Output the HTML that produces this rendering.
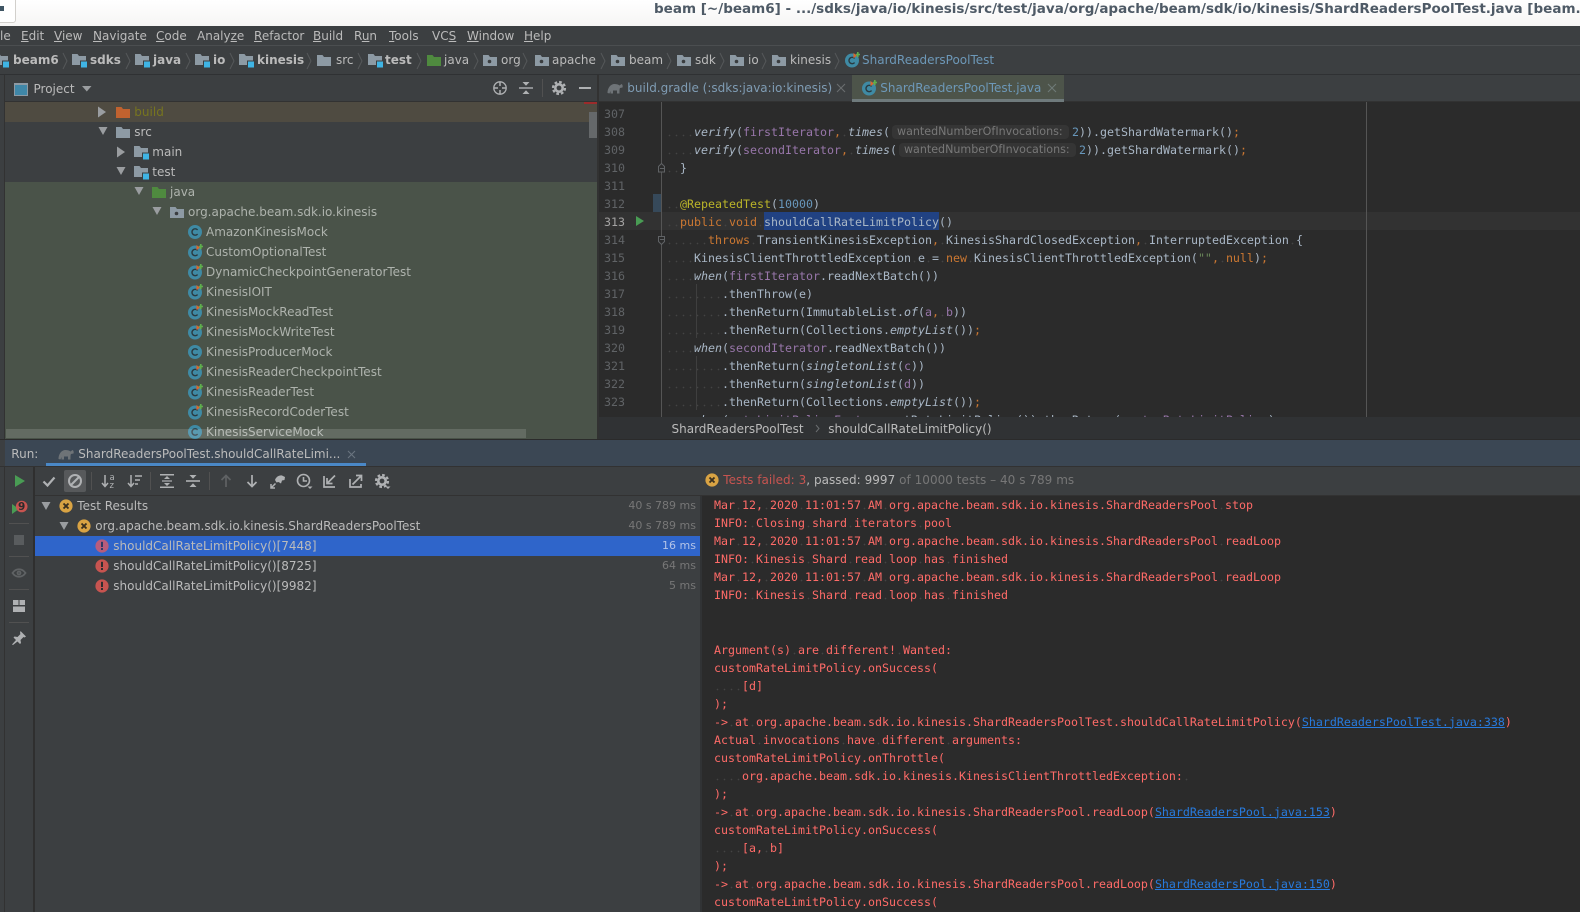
<!DOCTYPE html>
<html><head><meta charset="utf-8"><title>beam</title>
<style>
html,body{margin:0;padding:0;background:#3c3f41;width:1580px;height:912px;overflow:hidden}
#r{position:relative;width:1580px;height:912px;overflow:hidden;font:12px/20px "DejaVu Sans",sans-serif;color:#bbb}
.a{position:absolute}
.t{position:absolute;white-space:pre;line-height:20px}
.ic{position:absolute;width:16px;height:16px;overflow:visible}
.m{font-family:"DejaVu Sans Mono",monospace;font-size:11.63px;line-height:18px;white-space:pre;position:absolute;height:18px}
.code{color:#a9b7c6;left:666px;margin-top:1px}
.ln{color:#606366;left:604px;margin-top:1px}
.con{color:#ff6b68;left:714px}
.con a{color:#287bde;text-decoration:underline}
b{font-weight:normal;display:inline-block;vertical-align:top;height:18px;background:radial-gradient(circle at 3.5px 12.5px,#444 .6px,transparent 1px) 0 0/7px 18px repeat-x}
i{font-style:italic}
s{text-decoration:none;color:#cc7832}
u{text-decoration:none;color:#9876aa}
em{font-style:normal;color:#6897bb}
.h{display:inline-block;vertical-align:top;box-sizing:border-box;width:177px;height:14px;margin:2px 3px 0 2px;padding-left:5px;background:#353535;border-radius:4px;font:11.1px/14px "DejaVu Sans",sans-serif;color:#787878}
.sel{display:inline-block;vertical-align:top;height:18px;line-height:20px;margin-top:-1px;background:#214283}
.mu{text-decoration:underline}
.bd{font-weight:bold}
.dim{color:#777}
.dur{font-size:11px}
.sep{position:absolute;width:1px;background:#515151}
.g{position:absolute;width:1px;background:#3f3f3f}
.tr{color:#aeb3ad}
</style></head><body><div id="r">

<svg width="0" height="0" style="position:absolute"><defs>
<symbol id="fd" viewBox="0 0 16 16"><path d="M1 3h5.5L8 5h7v9H1z" fill="#8d9aa4"/></symbol>
<symbol id="sr" viewBox="0 0 16 16"><path d="M1 2h5.5L8 4h7v9H1z" fill="#8d9aa4"/><rect x="9" y="8.5" width="7" height="7" fill="#3c3f41"/><rect x="10" y="9.5" width="6" height="6" fill="#3fb4e4"/></symbol>
<symbol id="pk" viewBox="0 0 16 16"><path d="M1 3h5.5L8 5h7v9H1z" fill="#8d9aa4"/><circle cx="7.5" cy="9.5" r="1.8" fill="#3a3d3f"/></symbol>
<symbol id="gn" viewBox="0 0 16 16"><path d="M1 3h5.5L8 5h7v9H1z" fill="#4f8a3f"/></symbol>
<symbol id="or" viewBox="0 0 16 16"><path d="M1 3h5.5L8 5h7v9H1z" fill="#c0622f"/></symbol>
<symbol id="cl" viewBox="0 0 16 16"><circle cx="8" cy="8" r="7" fill="#3f8aa4"/><path d="M10.6 5.9a3.2 3.2 0 1 0 0 4.2" fill="none" stroke="#2a3a40" stroke-width="1.4"/></symbol>
<symbol id="ct" viewBox="0 0 16 16"><circle cx="8" cy="8.5" r="7" fill="#3f8aa4"/><path d="M10.6 6.4a3.2 3.2 0 1 0 0 4.2" fill="none" stroke="#2a3a40" stroke-width="1.4"/><path d="M9.5 1l3.5 2.6-3.5 2.6z" fill="#d9682e"/><path d="M13 0h1.6v1.8h1.6v1.5h-1.6v2H13v-2h-1V1.800h1z" fill="#5faf4d"/></symbol>
<symbol id="ar" viewBox="0 0 16 16"><path d="M4 2.500l8 5.500-8 5.500z" fill="#9a9da0"/></symbol>
<symbol id="ad" viewBox="0 0 16 16"><path d="M3.500 4h9L8 12z" fill="#9a9da0"/></symbol>
<symbol id="wn" viewBox="0 0 16 16"><circle cx="8" cy="8" r="6.600" fill="#d9a343"/><path d="M5.500 5.500l5 5M10.500 5.500l-5 5" stroke="#3a3020" stroke-width="1.900"/></symbol>
<symbol id="er" viewBox="0 0 16 16"><circle cx="8" cy="8" r="6.600" fill="#c75450"/><rect x="7" y="3.800" width="2" height="5.200" fill="#2f2f2f"/><rect x="7" y="10" width="2" height="2" fill="#2f2f2f"/></symbol>
<symbol id="eS" viewBox="0 0 16 16"><circle cx="8" cy="8" r="6.600" fill="#b85c7c"/><rect x="7" y="3.800" width="2" height="5.200" fill="#2f3a66"/><rect x="7" y="10" width="2" height="2" fill="#2f3a66"/></symbol>
<symbol id="gr" viewBox="0 0 16 16"><circle cx="8" cy="8" r="3.700" fill="none" stroke="#afb1b3" stroke-width="2.600"/><circle cx="8" cy="8" r="6" fill="none" stroke="#afb1b3" stroke-width="2.200" stroke-dasharray="2.700 2"/></symbol>
<symbol id="el" viewBox="0 0 16 16"><path d="M0.500 13c0-5 3-9 7-9 2 0 4 .5 5 1.500l2-1.500c1 .5 1.500 2 1 3.500l-2.500.5c-.5 1-.5 2-.5 5.500h-2.500v-3H6v3H3.500v-2.500l-1 2.500z" fill="#6e7377"/></symbol>
</defs></svg>

<!-- title bar -->
<div class="a" style="left:0;top:0;width:1580px;height:26px;background:linear-gradient(#fff,#f6f5f4)"></div>
<div class="a" style="left:-2px;top:-2px;width:16px;height:23px;border:1px solid #d2d0cc;background:#fff;border-radius:0 0 3px 0"></div>
<div class="a" style="left:0;top:6px;width:4px;height:5px;background:#3f5564"></div>
<div class="t" style="left:654px;top:-1px;color:#4e5a66;font-weight:bold;font-size:13.52px;line-height:20px">beam [~/beam6] - .../sdks/java/io/kinesis/src/test/java/org/apache/beam/sdk/io/kinesis/ShardReadersPoolTest.java [beam.</div>

<!-- menu -->
<div class="a" style="left:0;top:26px;width:1580px;height:19px;background:#3c3f41"></div>
<div class="a" style="left:0;top:45px;width:1580px;height:1px;background:#4b4e50"></div>
<div class="t" style="left:0;top:26px">le</div>
<div class="t" style="left:21px;top:26px"><span class="mu">E</span>dit</div>
<div class="t" style="left:54px;top:26px"><span class="mu">V</span>iew</div>
<div class="t" style="left:93px;top:26px"><span class="mu">N</span>avigate</div>
<div class="t" style="left:156px;top:26px"><span class="mu">C</span>ode</div>
<div class="t" style="left:197px;top:26px">Analy<span class="mu">z</span>e</div>
<div class="t" style="left:254px;top:26px"><span class="mu">R</span>efactor</div>
<div class="t" style="left:313px;top:26px"><span class="mu">B</span>uild</div>
<div class="t" style="left:354px;top:26px">R<span class="mu">u</span>n</div>
<div class="t" style="left:389px;top:26px"><span class="mu">T</span>ools</div>
<div class="t" style="left:432px;top:26px">VC<span class="mu">S</span></div>
<div class="t" style="left:467px;top:26px"><span class="mu">W</span>indow</div>
<div class="t" style="left:524px;top:26px"><span class="mu">H</span>elp</div>

<!-- nav bar -->
<div class="a" style="left:0;top:74px;width:1580px;height:1px;background:#2f3133"></div>
<svg class="ic" style="left:-7px;top:52px"><use href="#sr"/></svg>
<div class="t bd" style="left:13px;top:50px">beam6</div>
<svg class="ic" style="left:71px;top:52px"><use href="#sr"/></svg>
<div class="t bd" style="left:90px;top:50px">sdks</div>
<svg class="ic" style="left:134px;top:52px"><use href="#sr"/></svg>
<div class="t bd" style="left:153px;top:50px">java</div>
<svg class="ic" style="left:194px;top:52px"><use href="#sr"/></svg>
<div class="t bd" style="left:213px;top:50px">io</div>
<svg class="ic" style="left:238px;top:52px"><use href="#sr"/></svg>
<div class="t bd" style="left:257px;top:50px">kinesis</div>
<svg class="ic" style="left:316px;top:52px"><use href="#fd"/></svg>
<div class="t" style="left:336px;top:50px">src</div>
<svg class="ic" style="left:367px;top:52px"><use href="#sr"/></svg>
<div class="t bd" style="left:385px;top:50px">test</div>
<svg class="ic" style="left:426px;top:52px"><use href="#gn"/></svg>
<div class="t" style="left:444px;top:50px">java</div>
<svg class="ic" style="left:482px;top:52px"><use href="#pk"/></svg>
<div class="t" style="left:501px;top:50px">org</div>
<svg class="ic" style="left:534px;top:52px"><use href="#pk"/></svg>
<div class="t" style="left:552px;top:50px">apache</div>
<svg class="ic" style="left:610px;top:52px"><use href="#pk"/></svg>
<div class="t" style="left:629px;top:50px">beam</div>
<svg class="ic" style="left:676px;top:52px"><use href="#pk"/></svg>
<div class="t" style="left:695px;top:50px">sdk</div>
<svg class="ic" style="left:729px;top:52px"><use href="#pk"/></svg>
<div class="t" style="left:748px;top:50px">io</div>
<svg class="ic" style="left:771px;top:52px"><use href="#pk"/></svg>
<div class="t" style="left:790px;top:50px">kinesis</div>
<svg class="ic" style="left:844px;top:52px"><use href="#ct"/></svg>
<div class="t" style="left:862px;top:50px;color:#6d98b8">ShardReadersPoolTest</div>
<svg class="a" style="left:0;top:50px" width="860" height="22" fill="none" stroke="#55585a" stroke-width="1">
<path d="M63 3l4 8-4 8M126 3l4 8-4 8M186 3l4 8-4 8M230 3l4 8-4 8M307 3l4 8-4 8M358 3l4 8-4 8M417 3l4 8-4 8M474 3l4 8-4 8M523 3l4 8-4 8M601 3l4 8-4 8M667 3l4 8-4 8M720 3l4 8-4 8M762 3l4 8-4 8M835 3l4 8-4 8"/></svg>

<!-- project tool window header -->
<div class="a" style="left:4px;top:75px;width:1px;height:365px;background:#323232"></div>
<div class="a" style="left:5px;top:101px;width:593px;height:1px;background:#323232"></div>
<div class="a" style="left:14px;top:83px;width:12px;height:10px;border:1px solid #8d9aa4;border-top-width:2px;background:#3f87a8"></div>
<div class="t" style="left:33.500px;top:78.600px">Project</div>
<svg class="a" style="left:82px;top:85px" width="10" height="7"><path d="M0 1h9.500L4.800 6.500z" fill="#9a9da0"/></svg>
<svg class="ic" style="left:492px;top:80px" fill="none" stroke="#afb1b3" stroke-width="1.300"><circle cx="8" cy="8" r="6.200"/><path d="M8 1.500v4.500M8 10v4.500M1.500 8h4.500M10 8h4.500" stroke-width="1.500"/></svg>
<svg class="ic" style="left:518px;top:80px" fill="#afb1b3"><rect x="1" y="7.300" width="14" height="1.400"/><path d="M4.500 2h7L8 5.800zM4.500 14h7L8 10.200z"/></svg>
<div class="sep" style="left:542px;top:79px;height:18px"></div>
<svg class="ic" style="left:551px;top:80px"><use href="#gr"/></svg>
<div class="a" style="left:579px;top:87px;width:12px;height:2px;background:#afb1b3"></div>

<!-- project tree -->
<div class="a" style="left:5px;top:102px;width:593px;height:20px;background:#4f4b41"></div>
<div class="a" style="left:5px;top:182px;width:593px;height:257px;background:#4a5349"></div>
<div class="a" style="left:584px;top:102px;width:14px;height:2px;background:#9c2b2b"></div>
<div class="a" style="left:589px;top:112px;width:8px;height:26px;background:#65686a"></div>

<svg class="ic" style="left:94px;top:104px"><use href="#ar"/></svg>
<svg class="ic" style="left:115px;top:103.500px"><use href="#or"/></svg>
<div class="t" style="left:134.300px;top:101.700px;color:#77751f">build</div>
<svg class="ic" style="left:95px;top:123px"><use href="#ad"/></svg>
<svg class="ic" style="left:115px;top:123.500px"><use href="#fd"/></svg>
<div class="t" style="left:134.300px;top:121.700px">src</div>
<svg class="ic" style="left:113px;top:144px"><use href="#ar"/></svg>
<svg class="ic" style="left:133px;top:143.700px"><use href="#sr"/></svg>
<div class="t" style="left:152.300px;top:141.700px">main</div>
<svg class="ic" style="left:113px;top:163px"><use href="#ad"/></svg>
<svg class="ic" style="left:133px;top:163.700px"><use href="#sr"/></svg>
<div class="t" style="left:152.300px;top:161.700px">test</div>
<svg class="ic" style="left:131px;top:183px"><use href="#ad"/></svg>
<svg class="ic" style="left:151px;top:183.700px"><use href="#gn"/></svg>
<div class="t tr" style="left:170px;top:181.700px">java</div>
<svg class="ic" style="left:149px;top:203px"><use href="#ad"/></svg>
<svg class="ic" style="left:169px;top:203.700px"><use href="#pk"/></svg>
<div class="t tr" style="left:188px;top:201.700px">org.apache.beam.sdk.io.kinesis</div>

<svg class="ic" style="left:187px;top:223.700px"><use href="#cl"/></svg><div class="t tr" style="left:206px;top:221.700px">AmazonKinesisMock</div>
<svg class="ic" style="left:187px;top:243.700px"><use href="#ct"/></svg><div class="t tr" style="left:206px;top:241.700px">CustomOptionalTest</div>
<svg class="ic" style="left:187px;top:263.700px"><use href="#ct"/></svg><div class="t tr" style="left:206px;top:261.700px">DynamicCheckpointGeneratorTest</div>
<svg class="ic" style="left:187px;top:283.700px"><use href="#ct"/></svg><div class="t tr" style="left:206px;top:281.700px">KinesisIOIT</div>
<svg class="ic" style="left:187px;top:303.700px"><use href="#ct"/></svg><div class="t tr" style="left:206px;top:301.700px">KinesisMockReadTest</div>
<svg class="ic" style="left:187px;top:323.700px"><use href="#ct"/></svg><div class="t tr" style="left:206px;top:321.700px">KinesisMockWriteTest</div>
<svg class="ic" style="left:187px;top:343.700px"><use href="#cl"/></svg><div class="t tr" style="left:206px;top:341.700px">KinesisProducerMock</div>
<svg class="ic" style="left:187px;top:363.700px"><use href="#ct"/></svg><div class="t tr" style="left:206px;top:361.700px">KinesisReaderCheckpointTest</div>
<svg class="ic" style="left:187px;top:383.700px"><use href="#ct"/></svg><div class="t tr" style="left:206px;top:381.700px">KinesisReaderTest</div>
<svg class="ic" style="left:187px;top:403.700px"><use href="#ct"/></svg><div class="t tr" style="left:206px;top:401.700px">KinesisRecordCoderTest</div>
<svg class="ic" style="left:187px;top:423.700px"><use href="#cl"/></svg><div class="t tr" style="left:206px;top:421.700px">KinesisServiceMock</div>
<div class="a" style="left:6px;top:429px;width:520px;height:9px;background:rgba(255,255,255,.14)"></div>

<!-- editor tabs -->
<div class="a" style="left:597px;top:75px;width:2px;height:365px;background:#323232"></div>
<div class="a" style="left:599px;top:101px;width:981px;height:1px;background:#323232"></div>
<svg class="ic" style="left:607px;top:80px"><use href="#el"/></svg>
<div class="t" style="left:627.300px;top:78px;color:#7f9cb4">build.gradle (:sdks:java:io:kinesis)</div>
<svg class="a" style="left:836px;top:83px" width="10" height="10" stroke="#6a6d6f" stroke-width="1.100"><path d="M1 1l8 8M9 1l-8 8"/></svg>
<div class="a" style="left:852px;top:75px;width:212px;height:24px;background:#4d544a"></div>
<div class="a" style="left:852px;top:99px;width:212px;height:3px;background:#6f7a7c"></div>
<svg class="ic" style="left:861px;top:80px"><use href="#ct"/></svg>
<div class="t" style="left:880.300px;top:78px;color:#6d98b8">ShardReadersPoolTest.java</div>
<svg class="a" style="left:1047px;top:83px" width="10" height="10" stroke="#6f7a78" stroke-width="1.100"><path d="M1 1l8 8M9 1l-8 8"/></svg>

<!-- editor -->
<div class="a" id="ed" style="left:599px;top:102px;width:981px;height:315px;background:#2b2b2b;overflow:hidden"></div>
<div class="a" style="left:599px;top:212px;width:981px;height:18px;background:#323232"></div>
<div class="a" style="left:653px;top:194px;width:8px;height:18px;background:#36495a"></div>
<div class="a" style="left:661px;top:102px;width:1px;height:315px;background:#555"></div>
<div class="a" style="left:1366px;top:102px;width:1px;height:315px;background:#555"></div>
<div class="g" style="left:696px;top:284px;height:54px"></div>
<div class="g" style="left:696px;top:356px;height:54px"></div>
<svg class="a" style="left:657px;top:163px" width="10" height="10" fill="#2b2b2b" stroke="#606366"><path d="M1.500 5.500v-2l3-3 3 3v5.500h-6z"/><path d="M3 5.500h4"/></svg>
<svg class="a" style="left:657px;top:235px" width="10" height="10" fill="#2b2b2b" stroke="#606366"><path d="M1.500 1.500h6v5l-3 3-3-3z"/><path d="M3 4.500h4"/></svg>
<svg class="a" style="left:635px;top:215px" width="10" height="12"><path d="M1 1l8 5-8 5z" fill="#499c54"/></svg>

<div class="m ln" style="top:104px">307</div>
<div class="m ln" style="top:122px">308</div>
<div class="m ln" style="top:140px">309</div>
<div class="m ln" style="top:158px">310</div>
<div class="m ln" style="top:176px">311</div>
<div class="m ln" style="top:194px">312</div>
<div class="m ln" style="top:212px;color:#a4a3a3">313</div>
<div class="m ln" style="top:230px">314</div>
<div class="m ln" style="top:248px">315</div>
<div class="m ln" style="top:266px">316</div>
<div class="m ln" style="top:284px">317</div>
<div class="m ln" style="top:302px">318</div>
<div class="m ln" style="top:320px">319</div>
<div class="m ln" style="top:338px">320</div>
<div class="m ln" style="top:356px">321</div>
<div class="m ln" style="top:374px">322</div>
<div class="m ln" style="top:392px">323</div>

<div class="m code" style="top:122px"><b>    </b><i>verify</i>(<u>firstIterator</u><s>,</s><b> </b><i>times</i>(<span class="h">wantedNumberOfInvocations:</span><em>2</em>)).getShardWatermark()<s>;</s></div>
<div class="m code" style="top:140px"><b>    </b><i>verify</i>(<u>secondIterator</u><s>,</s><b> </b><i>times</i>(<span class="h">wantedNumberOfInvocations:</span><em>2</em>)).getShardWatermark()<s>;</s></div>
<div class="m code" style="top:158px"><b>  </b>}</div>
<div class="m code" style="top:194px"><b>  </b><span style="color:#bbb529">@RepeatedTest</span>(<em>10000</em>)</div>
<div class="m code" style="top:212px"><b>  </b><s>public</s><b> </b><s>void</s><b> </b><span class="sel">shouldCallRateLimitPolicy</span>()</div>
<div class="m code" style="top:230px"><b>      </b><s>throws</s><b> </b>TransientKinesisException<s>,</s><b> </b>KinesisShardClosedException<s>,</s><b> </b>InterruptedException<b> </b>{</div>
<div class="m code" style="top:248px"><b>    </b>KinesisClientThrottledException<b> </b>e<b> </b>=<b> </b><s>new</s><b> </b>KinesisClientThrottledException(<span style="color:#6a8759">""</span><s>,</s><b> </b><s>null</s>)<s>;</s></div>
<div class="m code" style="top:266px"><b>    </b><i>when</i>(<u>firstIterator</u>.readNextBatch())</div>
<div class="m code" style="top:284px"><b>        </b>.thenThrow(e)</div>
<div class="m code" style="top:302px"><b>        </b>.thenReturn(ImmutableList.<i>of</i>(<u>a</u><s>,</s><b> </b><u>b</u>))</div>
<div class="m code" style="top:320px"><b>        </b>.thenReturn(Collections.<i>emptyList</i>())<s>;</s></div>
<div class="m code" style="top:338px"><b>    </b><i>when</i>(<u>secondIterator</u>.readNextBatch())</div>
<div class="m code" style="top:356px"><b>        </b>.thenReturn(<i>singletonList</i>(<u>c</u>))</div>
<div class="m code" style="top:374px"><b>        </b>.thenReturn(<i>singletonList</i>(<u>d</u>))</div>
<div class="m code" style="top:392px"><b>        </b>.thenReturn(Collections.<i>emptyList</i>())<s>;</s></div>
<div class="m code" style="top:410px;height:6px;overflow:hidden"><b>    </b><i>when</i>(<u>rateLimitPolicyFactory</u>.getRateLimitPolicy()).thenReturn(<u>customRateLimitPolicy</u>)<s>;</s></div>

<!-- breadcrumbs -->
<div class="a" style="left:599px;top:417px;width:981px;height:22px;background:#303234"></div>
<div class="t" style="left:671.500px;top:418.500px">ShardReadersPoolTest</div>
<svg class="a" style="left:815px;top:424px" width="6" height="9" fill="none" stroke="#6a6d6f"><path d="M1 1l3 3.500-3 3.500"/></svg>
<div class="t" style="left:828.300px;top:418.500px">shouldCallRateLimitPolicy()</div>

<!-- run header -->
<div class="a" style="left:0;top:439px;width:1580px;height:1px;background:#2b2b2b"></div>
<div class="a" style="left:5px;top:440px;width:1575px;height:26px;background:#3b4754"></div>
<div class="a" style="left:0;top:466px;width:1580px;height:1px;background:#323232"></div>
<div class="t" style="left:11.300px;top:444px">Run:</div>
<svg class="ic" style="left:58px;top:446px"><use href="#el"/></svg>
<div class="t" style="left:78.300px;top:444px">ShardReadersPoolTest.shouldCallRateLimi...</div>
<svg class="a" style="left:347px;top:450px" width="9" height="9" stroke="#6a7580" stroke-width="1.100"><path d="M1 1l7 7M8 1l-7 7"/></svg>
<div class="a" style="left:46px;top:463px;width:320px;height:3px;background:#4a88c7"></div>

<!-- left stripe -->
<div class="a" style="left:4px;top:467px;width:1px;height:445px;background:#323232"></div>
<div class="a" style="left:33px;top:467px;width:2px;height:445px;background:#2f2f2f"></div>
<svg class="a" style="left:14px;top:474px" width="12" height="14"><path d="M1 1l10 6-10 6z" fill="#499c54"/></svg>
<svg class="a" style="left:11px;top:499px" width="18" height="17"><path d="M1 5l7 5-7 5z" fill="#499c54"/><circle cx="10.700" cy="7.500" r="5.800" fill="#c75450"/><text x="10.700" y="11.200" font-family="DejaVu Sans" font-weight="bold" font-size="10.500" text-anchor="middle" fill="#2b2b2b">9</text></svg>
<div class="a" style="left:9px;top:523px;width:20px;height:1px;background:#515151"></div>
<div class="a" style="left:14px;top:535px;width:10px;height:10px;background:#595c5e"></div>
<div class="a" style="left:9px;top:556px;width:20px;height:1px;background:#515151"></div>
<svg class="ic" style="left:11px;top:565px" fill="none" stroke="#5f6264" stroke-width="1.800"><path d="M1.500 8c3.500-5 9.500-5 13 0-3.500 5-9.500 5-13 0z"/><circle cx="8" cy="8" r="1.500"/></svg>
<div class="a" style="left:9px;top:589px;width:20px;height:1px;background:#515151"></div>
<svg class="ic" style="left:11px;top:598px" fill="#afb1b3"><path d="M2 2h5.500v5H2zM8.500 2H14v5H8.500zM2 8.500h12V14H2z"/></svg>
<div class="a" style="left:9px;top:622px;width:20px;height:1px;background:#515151"></div>
<svg class="ic" style="left:11px;top:630px" fill="#afb1b3"><path d="M9.500 1l5.500 5.500-1.500 1-1-.5-3 3 .5 3-1 1-2.500-2.500L2 15l-1-.5L5 10 2.500 7.500l1-1 3 .5 3-3-.5-1z"/></svg>

<!-- run toolbar -->
<div class="a" style="left:64px;top:470px;width:22px;height:22px;background:#57595b;border-radius:2px"></div>
<svg class="ic" style="left:41px;top:473px" fill="none" stroke="#afb1b3" stroke-width="2.200"><path d="M2.500 8.500l4 4 7-8"/></svg>
<svg class="ic" style="left:67px;top:473px" fill="none" stroke="#afb1b3" stroke-width="2"><circle cx="8" cy="8" r="6"/><path d="M4 12l8-8"/></svg>
<div class="sep" style="left:91px;top:472px;height:18px"></div>
<svg class="ic" style="left:101px;top:473px" fill="none" stroke="#afb1b3" stroke-width="1.500"><path d="M4 2v11M1 10l3 3.500L7 10"/><text x="8.500" y="7" font-family="DejaVu Sans" font-size="8.500" fill="#afb1b3" stroke="none">a</text><text x="8.500" y="15" font-family="DejaVu Sans" font-size="8.500" fill="#afb1b3" stroke="none">z</text></svg>
<svg class="ic" style="left:127px;top:473px" fill="none" stroke="#afb1b3" stroke-width="1.500"><path d="M4 2v11M1 10l3 3.500L7 10M8 3h7M8 7h5M8 11h3"/></svg>
<div class="sep" style="left:150px;top:472px;height:18px"></div>
<svg class="ic" style="left:159px;top:473px" fill="#afb1b3"><rect x="1" y="1" width="14" height="1.500"/><rect x="1" y="13.500" width="14" height="1.500"/><rect x="3" y="7.400" width="10" height="1.200"/><path d="M5 6l3-3 3 3zM5 10l3 3 3-3z"/></svg>
<svg class="ic" style="left:185px;top:473px" fill="#afb1b3"><rect x="1" y="7.200" width="14" height="1.600"/><path d="M4.500 2h7L8 5.800zM4.500 14h7L8 10.200z"/></svg>
<div class="sep" style="left:209px;top:472px;height:18px"></div>
<svg class="ic" style="left:218px;top:473px" fill="none" stroke="#5f6264" stroke-width="1.700"><path d="M8 14V2.500M3.500 7L8 2.500 12.500 7"/></svg>
<svg class="ic" style="left:244px;top:473px" fill="none" stroke="#afb1b3" stroke-width="1.700"><path d="M8 2v11.500M3.500 9L8 13.500 12.500 9"/></svg>
<svg class="ic" style="left:270px;top:473px" fill="#afb1b3"><path d="M5 7c1-3 4-5 7-4.500l3 1.500-.5 3-2.500.5-1 3-2.500-1.500-2 .5z"/><path d="M1 15l4.500-4.500M1 11v4h4" fill="none" stroke="#afb1b3" stroke-width="1.500"/></svg>
<svg class="ic" style="left:296px;top:473px" fill="none" stroke="#afb1b3" stroke-width="1.600"><circle cx="7.500" cy="7.500" r="6"/><path d="M7.500 4v4h3.500"/><path d="M11.500 13.500h5L14 16z" fill="#afb1b3" stroke="none"/></svg>
<svg class="ic" style="left:322px;top:473px" fill="none" stroke="#afb1b3" stroke-width="1.700"><path d="M2 3v11h11"/><path d="M13 2.500L5 10.500M5 5v5.500h5.500"/></svg>
<svg class="ic" style="left:348px;top:473px" fill="none" stroke="#afb1b3" stroke-width="1.700"><path d="M2 6v8h11V11"/><path d="M4.500 11.500L13 3M8 2.500h5.500V8"/></svg>
<svg class="ic" style="left:374px;top:473px"><use href="#gr"/><path d="M11.500 13.500h5L14 16z" fill="#afb1b3"/></svg>
<div class="a" style="left:35px;top:495px;width:1545px;height:1px;background:#323232"></div>

<!-- test status -->
<svg class="ic" style="left:704px;top:472px"><use href="#wn"/></svg>
<div class="t" style="left:723.300px;top:470px;color:#c75450;letter-spacing:.035px">Tests failed: 3<span style="color:#bbb">, passed: 9997</span><span class="dim"> of 10000 tests – 40 s 789 ms</span></div>

<!-- test tree -->
<div class="a" style="left:35px;top:536px;width:665px;height:20px;background:#2f65ca"></div>
<svg class="ic" style="left:38px;top:497.500px"><use href="#ad"/></svg>
<svg class="ic" style="left:58px;top:497.500px"><use href="#wn"/></svg>
<div class="t" style="left:77.300px;top:495.700px">Test Results</div>
<div class="t dim dur" style="right:884px;top:495.700px">40 s 789 ms</div>
<svg class="ic" style="left:56px;top:517.500px"><use href="#ad"/></svg>
<svg class="ic" style="left:76px;top:517.500px"><use href="#wn"/></svg>
<div class="t" style="left:95.300px;top:515.700px">org.apache.beam.sdk.io.kinesis.ShardReadersPoolTest</div>
<div class="t dim dur" style="right:884px;top:515.700px">40 s 789 ms</div>
<svg class="ic" style="left:94px;top:537.500px"><use href="#eS"/></svg>
<div class="t" style="left:113.300px;top:535.700px">shouldCallRateLimitPolicy()[7448]</div>
<div class="t dur" style="right:884px;top:535.700px;color:#b4c4e8">16 ms</div>
<svg class="ic" style="left:94px;top:557.500px"><use href="#er"/></svg>
<div class="t" style="left:113.300px;top:555.700px">shouldCallRateLimitPolicy()[8725]</div>
<div class="t dim dur" style="right:884px;top:555.700px">64 ms</div>
<svg class="ic" style="left:94px;top:577.500px"><use href="#er"/></svg>
<div class="t" style="left:113.300px;top:575.700px">shouldCallRateLimitPolicy()[9982]</div>
<div class="t dim dur" style="right:884px;top:575.700px">5 ms</div>

<!-- console -->
<div class="a" style="left:700px;top:496px;width:880px;height:416px;background:#2b2b2b;border-left:2px solid #313335;box-sizing:border-box"></div>
<div class="m con" style="top:496.200px">Mar<b> </b>12,<b> </b>2020<b> </b>11:01:57<b> </b>AM<b> </b>org.apache.beam.sdk.io.kinesis.ShardReadersPool<b> </b>stop</div>
<div class="m con" style="top:514.200px">INFO:<b> </b>Closing<b> </b>shard<b> </b>iterators<b> </b>pool</div>
<div class="m con" style="top:532.200px">Mar<b> </b>12,<b> </b>2020<b> </b>11:01:57<b> </b>AM<b> </b>org.apache.beam.sdk.io.kinesis.ShardReadersPool<b> </b>readLoop</div>
<div class="m con" style="top:550.200px">INFO:<b> </b>Kinesis<b> </b>Shard<b> </b>read<b> </b>loop<b> </b>has<b> </b>finished</div>
<div class="m con" style="top:568.200px">Mar<b> </b>12,<b> </b>2020<b> </b>11:01:57<b> </b>AM<b> </b>org.apache.beam.sdk.io.kinesis.ShardReadersPool<b> </b>readLoop</div>
<div class="m con" style="top:586.200px">INFO:<b> </b>Kinesis<b> </b>Shard<b> </b>read<b> </b>loop<b> </b>has<b> </b>finished</div>
<div class="m con" style="top:640.500px">Argument(s)<b> </b>are<b> </b>different!<b> </b>Wanted:</div>
<div class="m con" style="top:658.500px">customRateLimitPolicy.onSuccess(</div>
<div class="m con" style="top:676.500px"><b>    </b>[d]</div>
<div class="m con" style="top:694.500px">);</div>
<div class="m con" style="top:712.500px">-&gt;<b> </b>at<b> </b>org.apache.beam.sdk.io.kinesis.ShardReadersPoolTest.shouldCallRateLimitPolicy(<a>ShardReadersPoolTest.java:338</a>)</div>
<div class="m con" style="top:730.500px">Actual<b> </b>invocations<b> </b>have<b> </b>different<b> </b>arguments:</div>
<div class="m con" style="top:748.500px">customRateLimitPolicy.onThrottle(</div>
<div class="m con" style="top:766.500px"><b>    </b>org.apache.beam.sdk.io.kinesis.KinesisClientThrottledException:<b> </b></div>
<div class="m con" style="top:784.500px">);</div>
<div class="m con" style="top:802.500px">-&gt;<b> </b>at<b> </b>org.apache.beam.sdk.io.kinesis.ShardReadersPool.readLoop(<a>ShardReadersPool.java:153</a>)</div>
<div class="m con" style="top:820.500px">customRateLimitPolicy.onSuccess(</div>
<div class="m con" style="top:838.500px"><b>    </b>[a,<b> </b>b]</div>
<div class="m con" style="top:856.500px">);</div>
<div class="m con" style="top:874.500px">-&gt;<b> </b>at<b> </b>org.apache.beam.sdk.io.kinesis.ShardReadersPool.readLoop(<a>ShardReadersPool.java:150</a>)</div>
<div class="m con" style="top:892.500px">customRateLimitPolicy.onSuccess(</div>

</div></body></html>
